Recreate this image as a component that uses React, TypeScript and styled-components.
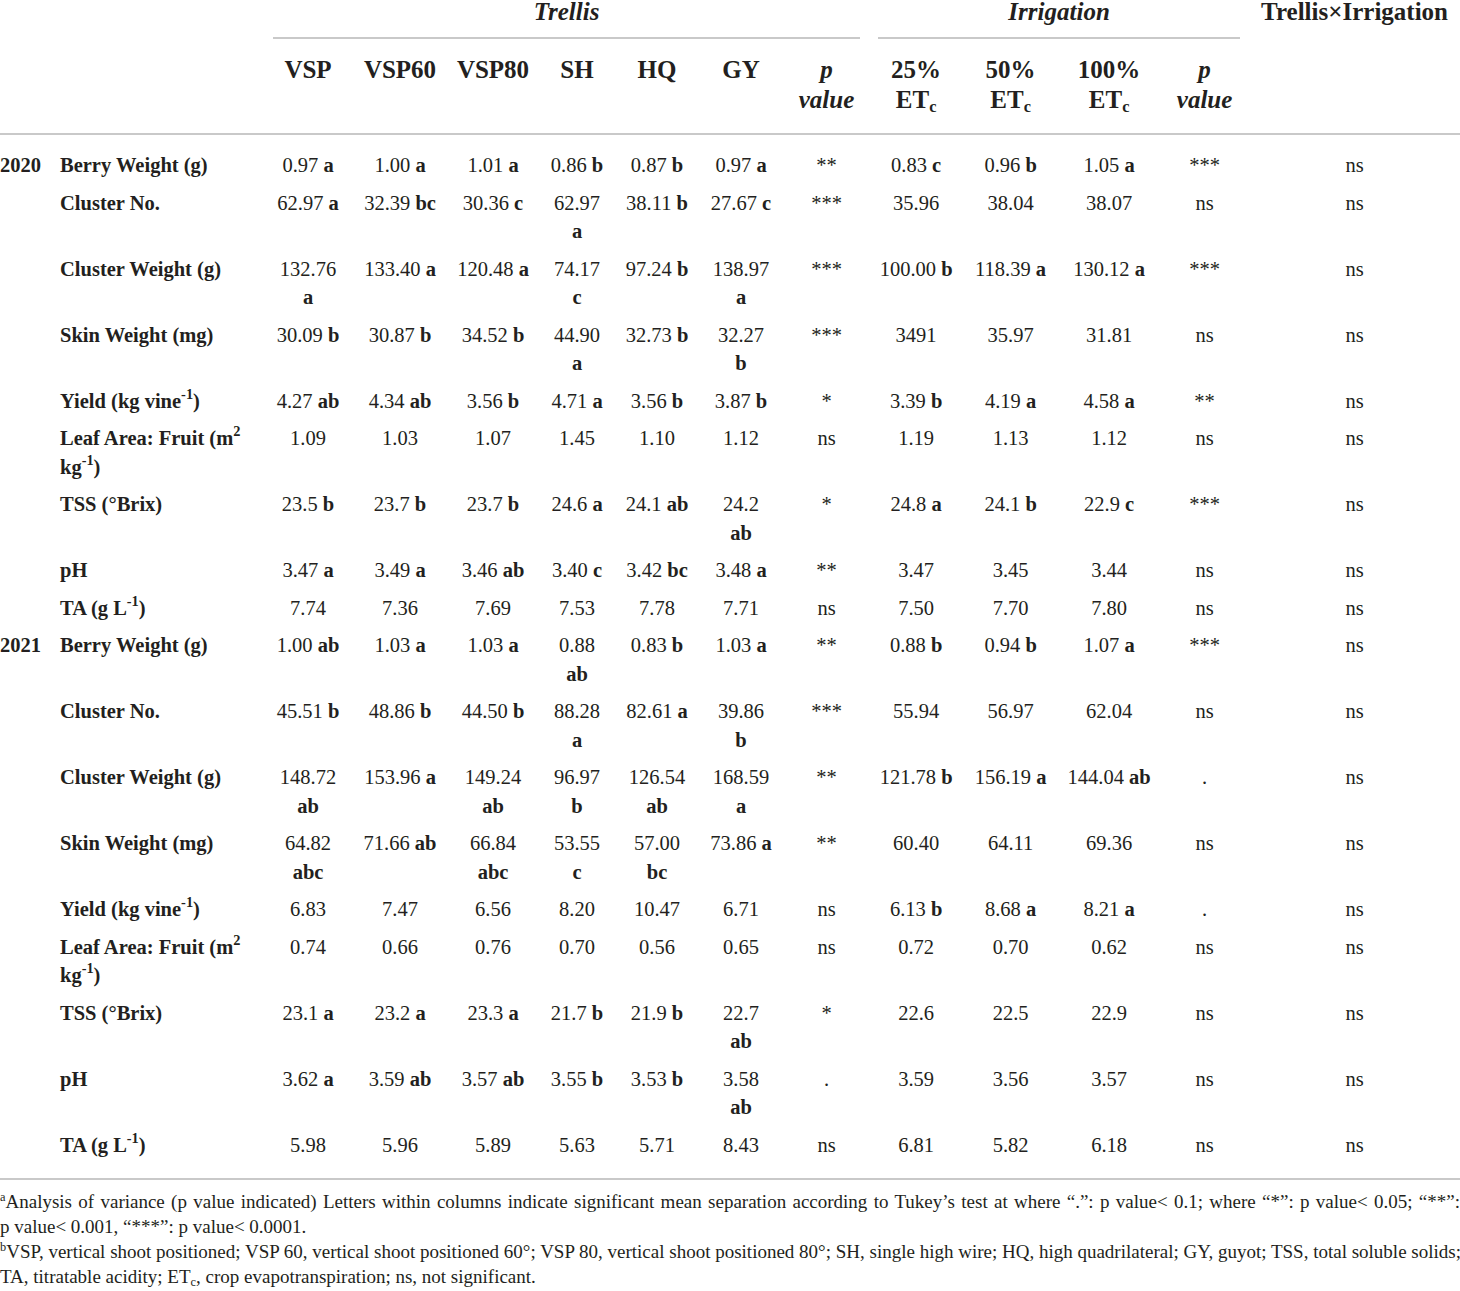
import React from 'react'
import styled, { createGlobalStyle } from 'styled-components'

const INK = '#231f20'
const RULE = '#c9c9c9'

const GlobalStyle = createGlobalStyle`
  body {
    margin: 0;
    background: #ffffff;
    color: ${INK};
    font-family: "Liberation Serif", "DejaVu Serif", serif;
  }
`

const Page = styled.div`
  width: 1460px;
`

const Table = styled.table`
  width: 1460px;
  table-layout: fixed;
  border-collapse: collapse;
  border-spacing: 0;
`

const Col = styled.col<{ $w: number }>`
  width: ${({ $w }) => $w}px;
`

const Blank = styled.th`
  padding: 0;
  border-bottom: 2px solid ${RULE};
`

const GroupHead = styled.th`
  padding: 0;
  vertical-align: top;
`

const GroupTitle = styled.div<{ $l: number; $r: number }>`
  margin: 0 ${({ $r }) => $r}px 0 ${({ $l }) => $l}px;
  padding-bottom: 13px;
  border-bottom: 2px solid ${RULE};
  font-size: 25px;
  line-height: 24px;
  font-style: italic;
  font-weight: 700;
  text-align: center;
`

const InteractionHead = styled.th`
  padding: 0;
  vertical-align: top;
  text-align: center;
  font-size: 25px;
  line-height: 24px;
  font-weight: 700;
  border-bottom: 2px solid ${RULE};
  white-space: nowrap;
`

const ColHead = styled.th<{ $italic?: boolean }>`
  padding: 16px 0 18px;
  vertical-align: top;
  text-align: center;
  font-size: 25px;
  line-height: 30px;
  font-weight: 700;
  font-style: ${({ $italic }) => ($italic ? 'italic' : 'normal')};
  border-bottom: 2px solid ${RULE};
  white-space: nowrap;
`

const Cell = styled.td<{ $first?: boolean; $last?: boolean }>`
  padding: ${({ $first }) => ($first ? 16 : 4)}px 0 ${({ $last }) => ($last ? 19 : 5)}px;
  vertical-align: top;
  text-align: center;
  font-size: 20.5px;
  line-height: 28.5px;
  white-space: nowrap;
  border-bottom: ${({ $last }) => ($last ? `2px solid ${RULE}` : 'none')};
`

const YearCell = styled(Cell)`
  text-align: left;
  font-weight: 700;
`

const LabelCell = styled(Cell)`
  text-align: left;
  padding-left: 8px;
  font-weight: 700;
`

const Letter = styled.b`
  font-weight: 700;
`

const Sup = styled.sup`
  font-size: 0.7em;
  line-height: 0;
  vertical-align: 0.6em;
`

const Sub = styled.sub`
  font-size: 0.65em;
  line-height: 0;
  vertical-align: -0.25em;
`

const Notes = styled.div`
  padding-top: 9px;
  font-size: 19px;
  line-height: 25px;
`

const NoteLine = styled.span<{ $fill?: boolean }>`
  display: block;
  white-space: nowrap;
  text-align: justify;
  text-align-last: ${({ $fill }) => ($fill ? 'justify' : 'left')};
`

const NoteMark = styled.sup`
  font-size: 0.65em;
  line-height: 0;
  vertical-align: 0.6em;
`

type Row = {
  year?: string
  label: React.ReactNode
  cells: string[]
}

const vine = (
  <>
    Yield (kg vine<Sup>-1</Sup>)
  </>
)
const leaf = (
  <>
    Leaf Area: Fruit (m<Sup>2</Sup>
    <br />
    kg<Sup>-1</Sup>)
  </>
)
const ta = (
  <>
    TA (g L<Sup>-1</Sup>)
  </>
)

const rows: Row[] = [
  { year: '2020', label: 'Berry Weight (g)', cells: ['0.97 a', '1.00 a', '1.01 a', '0.86 b', '0.87 b', '0.97 a', '**', '0.83 c', '0.96 b', '1.05 a', '***', 'ns'] },
  { label: 'Cluster No.', cells: ['62.97 a', '32.39 bc', '30.36 c', '62.97/a', '38.11 b', '27.67 c', '***', '35.96', '38.04', '38.07', 'ns', 'ns'] },
  { label: 'Cluster Weight (g)', cells: ['132.76/a', '133.40 a', '120.48 a', '74.17/c', '97.24 b', '138.97/a', '***', '100.00 b', '118.39 a', '130.12 a', '***', 'ns'] },
  { label: 'Skin Weight (mg)', cells: ['30.09 b', '30.87 b', '34.52 b', '44.90/a', '32.73 b', '32.27/b', '***', '3491', '35.97', '31.81', 'ns', 'ns'] },
  { label: vine, cells: ['4.27 ab', '4.34 ab', '3.56 b', '4.71 a', '3.56 b', '3.87 b', '*', '3.39 b', '4.19 a', '4.58 a', '**', 'ns'] },
  { label: leaf, cells: ['1.09', '1.03', '1.07', '1.45', '1.10', '1.12', 'ns', '1.19', '1.13', '1.12', 'ns', 'ns'] },
  { label: 'TSS (°Brix)', cells: ['23.5 b', '23.7 b', '23.7 b', '24.6 a', '24.1 ab', '24.2/ab', '*', '24.8 a', '24.1 b', '22.9 c', '***', 'ns'] },
  { label: 'pH', cells: ['3.47 a', '3.49 a', '3.46 ab', '3.40 c', '3.42 bc', '3.48 a', '**', '3.47', '3.45', '3.44', 'ns', 'ns'] },
  { label: ta, cells: ['7.74', '7.36', '7.69', '7.53', '7.78', '7.71', 'ns', '7.50', '7.70', '7.80', 'ns', 'ns'] },
  { year: '2021', label: 'Berry Weight (g)', cells: ['1.00 ab', '1.03 a', '1.03 a', '0.88/ab', '0.83 b', '1.03 a', '**', '0.88 b', '0.94 b', '1.07 a', '***', 'ns'] },
  { label: 'Cluster No.', cells: ['45.51 b', '48.86 b', '44.50 b', '88.28/a', '82.61 a', '39.86/b', '***', '55.94', '56.97', '62.04', 'ns', 'ns'] },
  { label: 'Cluster Weight (g)', cells: ['148.72/ab', '153.96 a', '149.24/ab', '96.97/b', '126.54/ab', '168.59/a', '**', '121.78 b', '156.19 a', '144.04 ab', '.', 'ns'] },
  { label: 'Skin Weight (mg)', cells: ['64.82/abc', '71.66 ab', '66.84/abc', '53.55/c', '57.00/bc', '73.86 a', '**', '60.40', '64.11', '69.36', 'ns', 'ns'] },
  { label: vine, cells: ['6.83', '7.47', '6.56', '8.20', '10.47', '6.71', 'ns', '6.13 b', '8.68 a', '8.21 a', '.', 'ns'] },
  { label: leaf, cells: ['0.74', '0.66', '0.76', '0.70', '0.56', '0.65', 'ns', '0.72', '0.70', '0.62', 'ns', 'ns'] },
  { label: 'TSS (°Brix)', cells: ['23.1 a', '23.2 a', '23.3 a', '21.7 b', '21.9 b', '22.7/ab', '*', '22.6', '22.5', '22.9', 'ns', 'ns'] },
  { label: 'pH', cells: ['3.62 a', '3.59 ab', '3.57 ab', '3.55 b', '3.53 b', '3.58/ab', '.', '3.59', '3.56', '3.57', 'ns', 'ns'] },
  { label: ta, cells: ['5.98', '5.96', '5.89', '5.63', '5.71', '8.43', 'ns', '6.81', '5.82', '6.18', 'ns', 'ns'] },
]

// year, label, 6 trellis + p, 3 irrigation + p, interaction
const widths = [52, 212, 88, 96, 90, 78, 82, 86, 85, 94, 95, 102, 89, 211]

const Value = ({ text }: { text: string }) => {
  const wrap = text.includes('/')
  const [num, letter] = text.split(wrap ? '/' : ' ')
  if (!letter) return <>{num}</>
  return (
    <>
      {num}
      {wrap ? <br /> : ' '}
      <Letter>{letter}</Letter>
    </>
  )
}

const Etc = ({ pct }: { pct: string }) => (
  <ColHead>
    {pct}
    <br />
    ET<Sub>c</Sub>
  </ColHead>
)

const PValue = () => (
  <ColHead $italic>
    p
    <br />
    value
  </ColHead>
)

export default function App() {
  return (
    <Page>
      <GlobalStyle />
      <Table>
        <colgroup>
          {widths.map((w, i) => (
            <Col key={i} $w={w} />
          ))}
        </colgroup>
        <thead>
          <tr>
            <Blank colSpan={2} rowSpan={2} />
            <GroupHead colSpan={7}>
              <GroupTitle $l={9} $r={9}>Trellis</GroupTitle>
            </GroupHead>
            <GroupHead colSpan={4}>
              <GroupTitle $l={9} $r={9}>Irrigation</GroupTitle>
            </GroupHead>
            <InteractionHead rowSpan={2}>Trellis×Irrigation</InteractionHead>
          </tr>
          <tr>
            <ColHead>VSP</ColHead>
            <ColHead>VSP60</ColHead>
            <ColHead>VSP80</ColHead>
            <ColHead>SH</ColHead>
            <ColHead>HQ</ColHead>
            <ColHead>GY</ColHead>
            <PValue />
            <Etc pct="25%" />
            <Etc pct="50%" />
            <Etc pct="100%" />
            <PValue />
          </tr>
        </thead>
        <tbody>
          {rows.map((row, i) => {
            const first = i === 0
            const last = i === rows.length - 1
            return (
              <tr key={i}>
                <YearCell $first={first} $last={last}>
                  {row.year}
                </YearCell>
                <LabelCell $first={first} $last={last}>
                  {row.label}
                </LabelCell>
                {row.cells.map((c, j) => (
                  <Cell key={j} $first={first} $last={last}>
                    <Value text={c} />
                  </Cell>
                ))}
              </tr>
            )
          })}
        </tbody>
      </Table>
      <Notes>
        <NoteLine $fill>
          <NoteMark>a</NoteMark>Analysis of variance (p value indicated) Letters within columns indicate significant
          mean separation according to Tukey’s test at where “.”: p value&lt; 0.1; where “*”: p value&lt; 0.05; “**”:
        </NoteLine>
        <NoteLine>p value&lt; 0.001, “***”: p value&lt; 0.0001.</NoteLine>
        <NoteLine $fill>
          <NoteMark>b</NoteMark>VSP, vertical shoot positioned; VSP 60, vertical shoot positioned 60°; VSP 80, vertical
          shoot positioned 80°; SH, single high wire; HQ, high quadrilateral; GY, guyot; TSS, total soluble solids;
        </NoteLine>
        <NoteLine>
          TA, titratable acidity; ET<Sub>c</Sub>, crop evapotranspiration; ns, not significant.
        </NoteLine>
      </Notes>
    </Page>
  )
}
